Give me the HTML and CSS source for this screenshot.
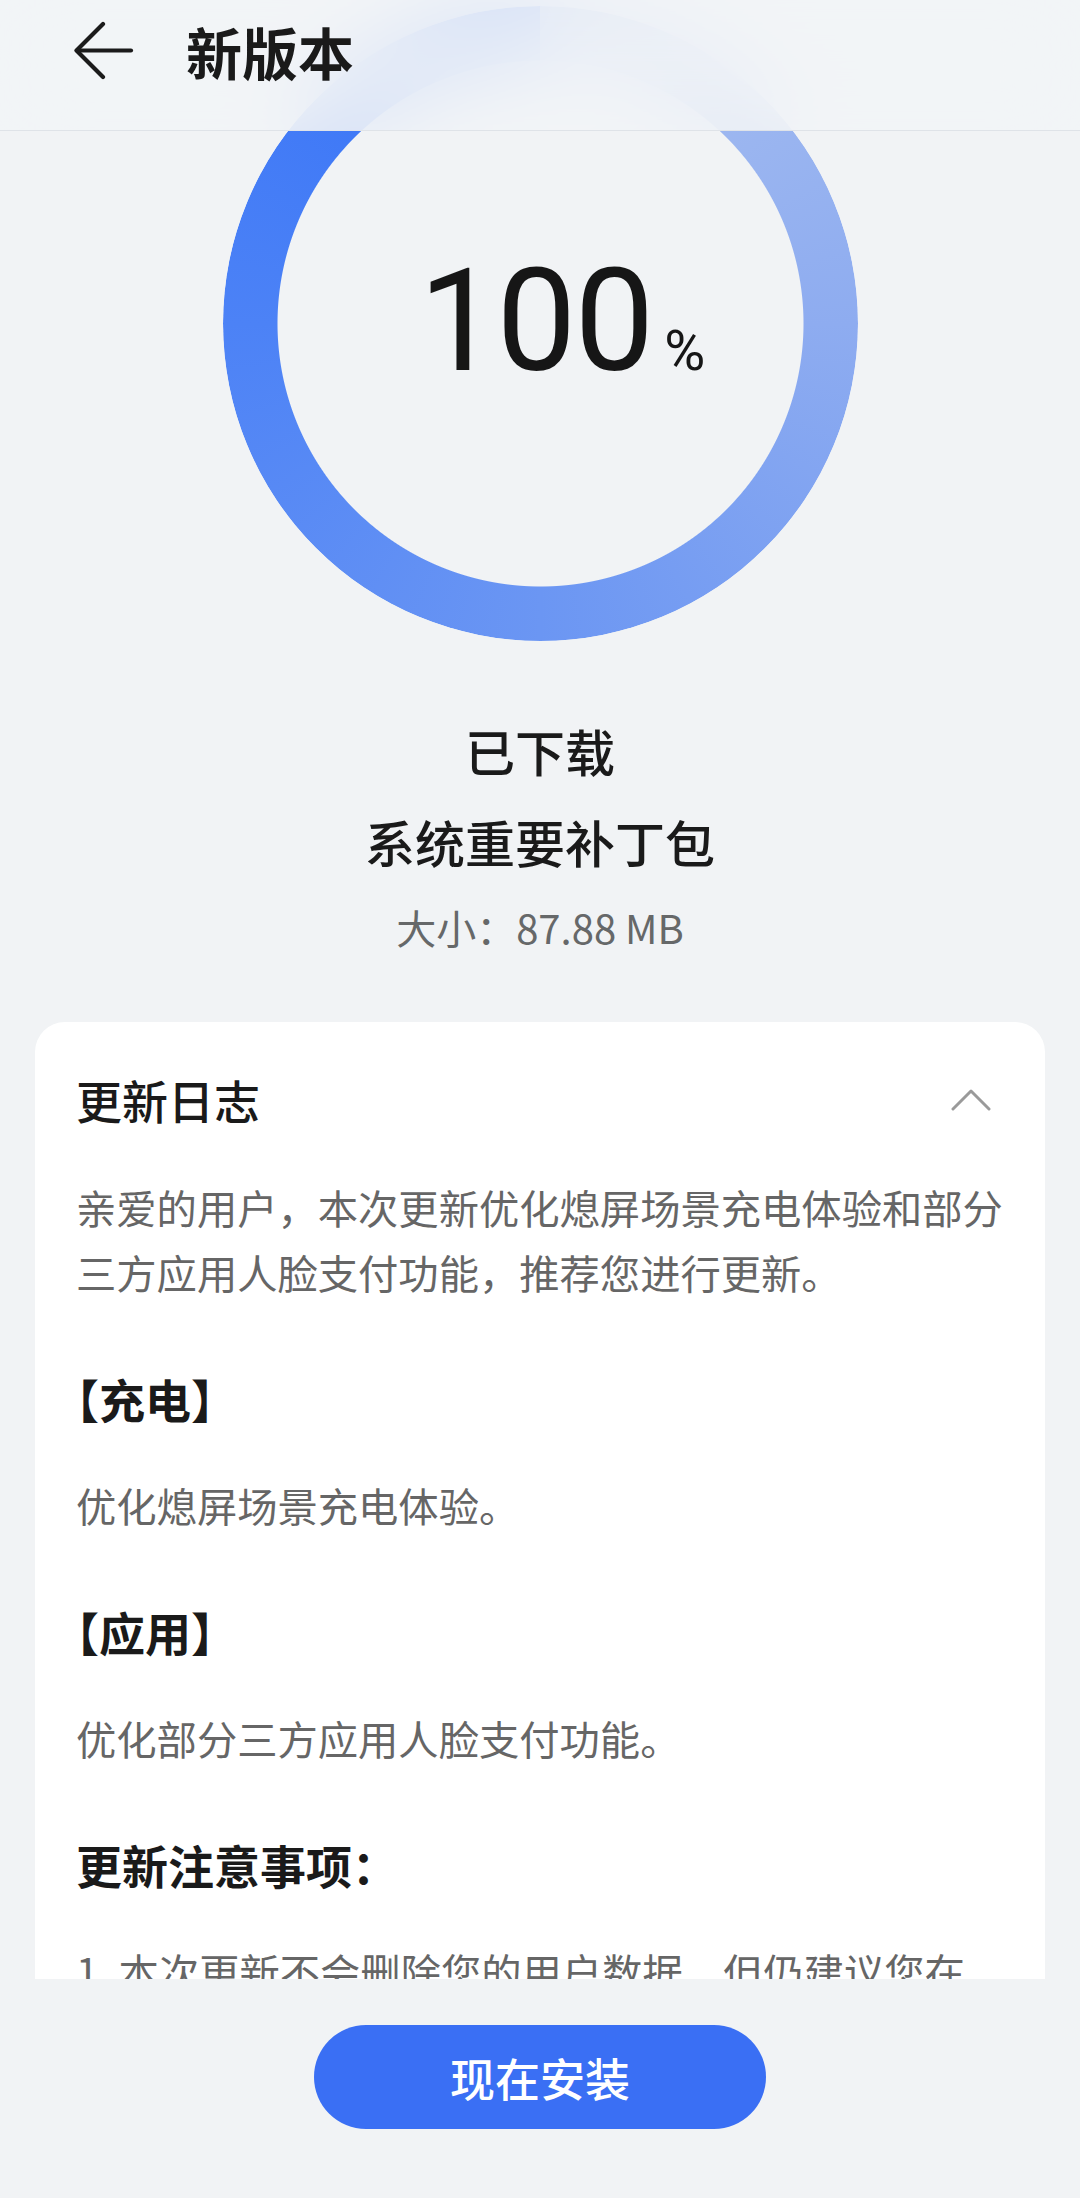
FILE: index.html
```html
<!DOCTYPE html>
<html lang="zh-CN">
<head>
<meta charset="utf-8">
<title>新版本</title>
<link rel="stylesheet" href="styles.css">
</head>
<body>
<div class="page">
  <header class="topbar">
    <div class="topbar-row">
      <svg class="back" viewBox="0 0 60 60" width="60" height="60" aria-hidden="true">
        <polyline points="29,3 2.5,29.5 29,56" fill="none" stroke="#1b1b1b" stroke-width="4.2" stroke-linecap="round" stroke-linejoin="round"/>
        <line x1="3" y1="29.5" x2="57" y2="29.5" stroke="#1b1b1b" stroke-width="4.2" stroke-linecap="round"/>
      </svg>
      <h1 class="title">新版本</h1>
    </div>
  </header>

  <main class="content">
    <div class="progress">
      <div class="ring"></div>
      <div class="pct"><span class="num">100</span><span class="unit">%</span></div>
    </div>

    <div class="status">已下载</div>
    <div class="pkg">系统重要补丁包</div>
    <div class="size">大小：87.88 MB</div>

    <section class="card">
      <div class="card-head">
        <h2 class="card-title">更新日志</h2>
        <svg class="chev" viewBox="0 0 40 24" width="40" height="24" aria-hidden="true">
          <polyline points="2,21 20,3 38,21" fill="none" stroke="#9a9a9a" stroke-width="3" stroke-linecap="round" stroke-linejoin="round"/>
        </svg>
      </div>
      <p class="para intro">亲爱的用户，本次更新优化熄屏场景充电体验和部分三方应用人脸支付功能，推荐您进行更新。</p>
      <h3 class="sub bracket">【充电】</h3>
      <p class="para">优化熄屏场景充电体验。</p>
      <h3 class="sub bracket">【应用】</h3>
      <p class="para">优化部分三方应用人脸支付功能。</p>
      <h3 class="sub">更新注意事项：</h3>
      <p class="para">1. 本次更新不会删除您的用户数据，但仍建议您在</p>
    </section>
  </main>

  <footer class="footer">
    <button class="install" type="button">现在安装</button>
  </footer>
</div>
</body>
</html>
```

FILE: styles.css
```css
* {
  box-sizing: border-box;
}

html, body {
  margin: 0;
  padding: 0;
}

body {
  background: #f1f3f5;
  font-family: "Noto Sans CJK SC", "Noto Sans", sans-serif;
  color: #1a1a1a;
}

.page {
  position: relative;
  width: 1080px;
  height: 2198px;
  display: flex;
  flex-direction: column;
  overflow: hidden;
}

/* top app bar floats over the scrolled content */
.topbar {
  position: absolute;
  top: 0;
  left: 0;
  right: 0;
  height: 131px;
  z-index: 5;
  background: rgba(242, 244, 247, 0.86);
  backdrop-filter: blur(40px);
  -webkit-backdrop-filter: blur(40px);
  border-bottom: 1px solid #dfe3e8;
}

.topbar-row {
  height: 102px;
  display: flex;
  align-items: center;
  padding-left: 74px;
  gap: 52px;
}

.back {
  display: block;
  flex: none;
}

.title {
  margin: 0;
  font-size: 56px;
  font-weight: 700;
  line-height: 1;
  color: #1a1a1a;
}

.content {
  flex: 1;
  min-height: 0;
  overflow: hidden;
  display: flex;
  flex-direction: column;
  align-items: center;
}

.content > * {
  flex: none;
}

.progress {
  display: grid;
  margin-top: 6px;
  width: 635px;
  height: 635px;
}

.ring {
  grid-area: 1 / 1;
  border-radius: 50%;
  background: conic-gradient(from 0deg, #a9c0f0 0deg, #8eacf0 90deg, #6b96f3 180deg, #4c82f6 270deg, #3471f7 360deg);
  -webkit-mask: radial-gradient(farthest-side, transparent calc(100% - 55px), #000 calc(100% - 54px));
  mask: radial-gradient(farthest-side, transparent calc(100% - 55px), #000 calc(100% - 54px));
}

.pct {
  grid-area: 1 / 1;
  align-self: center;
  justify-self: center;
  display: flex;
  align-items: baseline;
  gap: 12px;
  margin-left: 44px;
  margin-top: -4px;
  font-family: Roboto, "Noto Sans", sans-serif;
  color: #161616;
}

.num {
  font-size: 142px;
  line-height: 1;
  font-weight: 400;
  letter-spacing: -2px;
}

.unit {
  font-size: 56px;
  line-height: 1;
}

.status,
.pkg {
  font-size: 50px;
  font-weight: 500;
  line-height: 70px;
  color: #1a1a1a;
}

.status {
  margin-top: 74px;
}

.pkg {
  margin-top: 21px;
}

.size {
  margin-top: 23px;
  font-size: 40px;
  line-height: 56px;
  color: #666869;
}

.card {
  align-self: stretch;
  margin: 67px 35px 0;
  padding: 45px 41px 60px;
  background: #ffffff;
  border-radius: 30px;
}

.card-head {
  display: flex;
  align-items: center;
  justify-content: space-between;
  height: 65px;
}

.card-title {
  margin: 0;
  font-size: 46px;
  font-weight: 500;
  line-height: 65px;
  color: #1a1a1a;
}

.chev {
  display: block;
  margin-right: 13px;
}

.para {
  margin: 0;
  font-size: 40.3px;
  line-height: 65px;
  color: #666666;
}

.intro {
  margin-top: 42px;
}

.sub {
  margin: 62px 0 41px;
  font-size: 46px;
  line-height: 65px;
  font-weight: 700;
  color: #1a1a1a;
}

.bracket {
  margin-left: -0.5em;
}

.footer {
  flex: none;
  height: 219px;
  display: flex;
  justify-content: center;
  align-items: flex-start;
  padding-top: 46px;
  background: #f1f3f5;
}

.install {
  width: 452px;
  height: 104px;
  border: none;
  border-radius: 52px;
  background: #3a6ff4;
  color: #ffffff;
  font-family: "Noto Sans CJK SC", "Noto Sans", sans-serif;
  font-size: 45px;
  font-weight: 500;
  letter-spacing: 0;
  padding: 0;
}
```
